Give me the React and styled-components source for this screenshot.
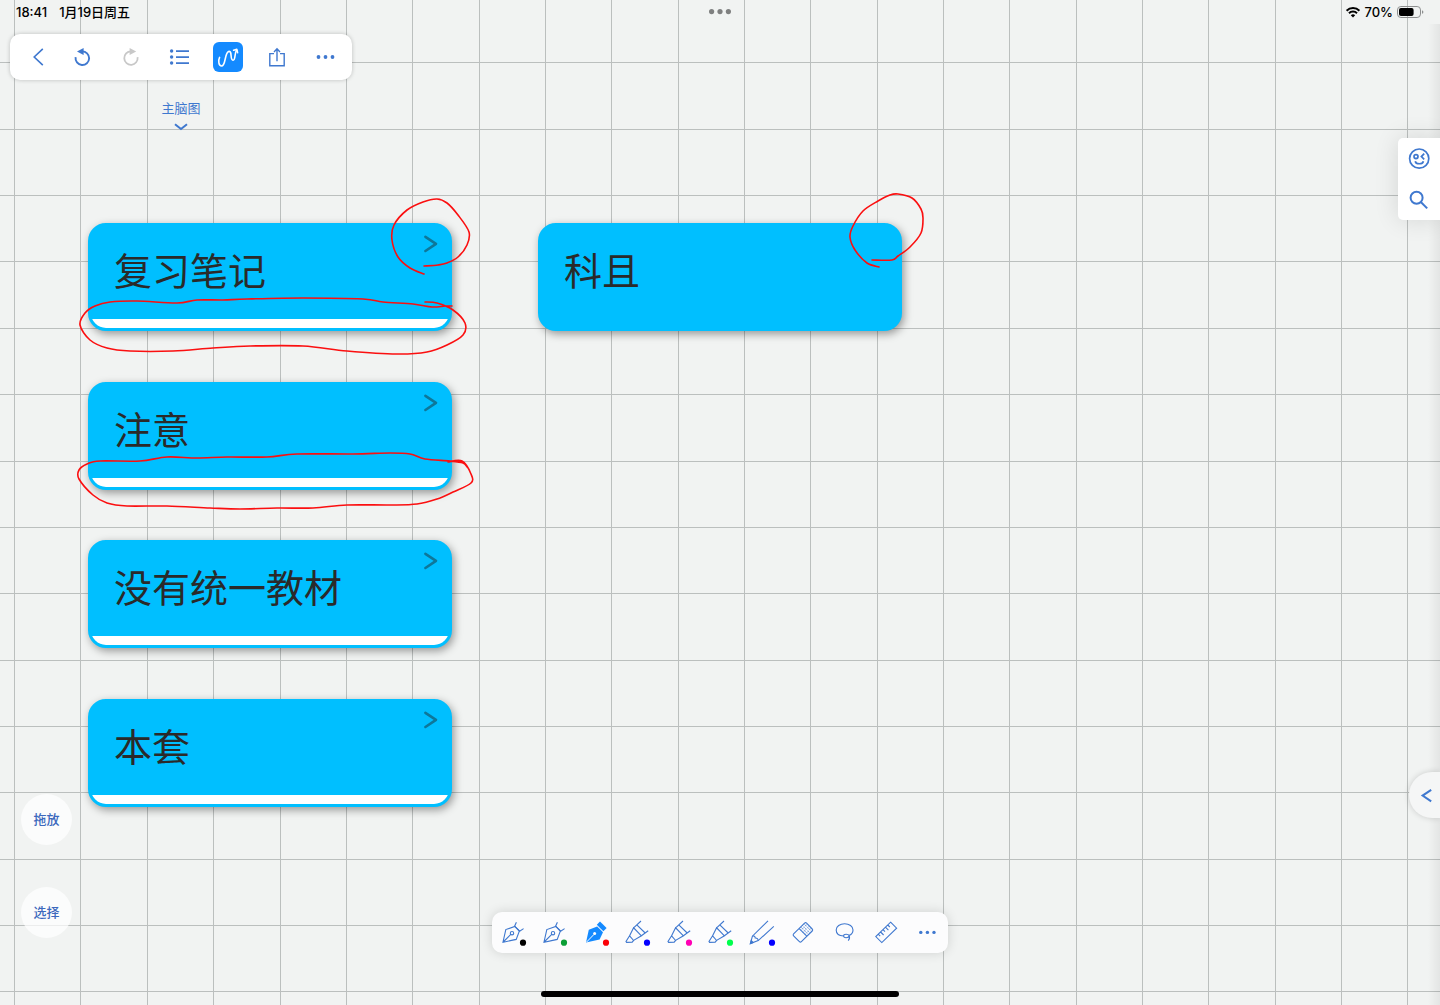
import React from 'react'
import styled, { createGlobalStyle } from 'styled-components'

const COLORS = {
  PAPER: '#f1f3f2',
  GRID: '#bbbfbe',
  BLUE: '#3f78cf',
  BLUE_DARK: '#3c69bd',
  ACTIVE: '#148aff',
  CARD: '#00bfff',
  INK: '#fb0f10',
  DISABLED: '#c8c8c8',
}

const GlobalStyle = createGlobalStyle`
  * {
    box-sizing: border-box;
  }
  body {
    margin: 0;
    font-family: Inter, 'Noto Sans CJK SC', sans-serif;
    background: ${COLORS.PAPER};
  }
  button {
    padding: 0;
    border: 0;
    background: none;
    font: inherit;
    color: inherit;
    cursor: pointer;
  }
  svg {
    display: block;
  }
`

const Screen = styled.div`
  position: relative;
  min-height: 100vh;
  display: grid;
  overflow: hidden;
`

// free canvas under the controls

const Canvas = styled.main`
  position: absolute;
  inset: 0;
`

const Layer = styled.svg`
  position: absolute;
  inset: 0;
  width: 100%;
  height: 100%;
  pointer-events: none;
`

const Card = styled.article`
  position: absolute;
  left: ${({ $x }) => $x}px;
  top: ${({ $y }) => $y}px;
  width: 364px;
  height: 108px;
  display: flex;
  flex-direction: column;
  justify-content: space-between;
  border: 3px solid ${COLORS.CARD};
  border-radius: 18px;
  background: ${COLORS.CARD};
  box-shadow: 2px 3px 9px rgba(0, 0, 0, 0.38);
  overflow: hidden;
`

const CardHead = styled.div`
  display: flex;
  justify-content: space-between;
  align-items: flex-start;
  padding: 8px 8px 0 23px;
`

const CardTitle = styled.h2`
  margin: 0;
  padding-top: 7px;
  font-family: 'Noto Sans CJK SC', sans-serif;
  font-size: 38px;
  font-weight: 400;
  line-height: 56px;
  color: #2a2a2a;
`

const CardStrip = styled.div`
  height: 9px;
  background: #fff;
`

// floating controls

const Chrome = styled.div`
  position: relative;
  display: grid;
  grid-template-rows: 24px 1fr 24px;
  pointer-events: none;

  button {
    pointer-events: auto;
  }
`

const StatusBar = styled.header`
  display: grid;
  grid-template-columns: 1fr auto 1fr;
  align-items: center;
  padding: 0 16px;
  font-size: 13px;
  font-weight: 500;
  line-height: 22px;
  color: #000;
`

const StatusGroup = styled.div`
  display: flex;
  align-items: center;
  justify-content: ${({ $end }) => ($end ? 'flex-end' : 'flex-start')};
  gap: ${({ $end }) => ($end ? 3 : 12)}px;
`

const Body = styled.div`
  display: grid;
  grid-template-columns: 1fr auto 1fr;
`

const LeftColumn = styled.div`
  display: flex;
  flex-direction: column;
  justify-content: space-between;
  align-items: flex-start;
  padding: 10px 0 43px 10px;
`

const TopTools = styled.div`
  display: flex;
  flex-direction: column;
  align-items: center;
  gap: 18px;
`

const Toolbar = styled.nav`
  height: 46px;
  display: flex;
  align-items: center;
  gap: 19px;
  padding: 0 11px 0 19px;
  border-radius: 10px;
  background: #fff;
  box-shadow: 0 0 4px rgba(0, 0, 0, 0.22);
`

const ToolButton = styled.button`
  width: ${({ $narrow }) => ($narrow ? 18 : 30)}px;
  height: 30px;
  border-radius: 6px;
  color: ${({ $active, disabled }) => (disabled ? COLORS.DISABLED : $active ? '#fff' : COLORS.BLUE)};
  background: ${({ $active }) => ($active ? COLORS.ACTIVE : 'none')};
`

const MapSwitch = styled.button`
  display: flex;
  flex-direction: column;
  align-items: center;
  gap: 5px;
  font-size: 13px;
  line-height: 20px;
  color: ${COLORS.BLUE};
`

const RoundButtons = styled.div`
  display: flex;
  flex-direction: column;
  gap: 42px;
  padding-left: 11px;
`

const RoundButton = styled.button`
  width: 51px;
  height: 51px;
  padding-bottom: 2px;
  border-radius: 50%;
  background: rgba(255, 255, 255, 0.72);
  font-size: 13px;
  font-weight: 500;
  color: ${COLORS.BLUE_DARK};
`

const PenBar = styled.nav`
  align-self: end;
  width: 456px;
  height: 41px;
  display: flex;
  margin-bottom: 28px;
  border-radius: 10px;
  background: #fcfcfd;
  box-shadow: 0 0 12px rgba(0, 0, 0, 0.14);
`

const PenButton = styled.button`
  flex: 1;
  height: 41px;
  color: ${COLORS.BLUE};
`

const RightColumn = styled.div`
  position: relative;
  display: flex;
  flex-direction: column;
  justify-content: space-between;
  align-items: flex-end;
  padding: 114px 0 163px;
`

const EdgeShade = styled.div`
  position: absolute;
  top: 0;
  right: 0;
  bottom: -24px;
  width: 12px;
  background: linear-gradient(to right, transparent, rgba(0, 0, 0, 0.06));
`

const SidePanel = styled.nav`
  position: relative;
  width: 42px;
  display: flex;
  flex-direction: column;
  border-radius: 5px 0 0 5px;
  background: #fff;
  box-shadow: 0 0 24px rgba(0, 0, 0, 0.12);
`

const SideButton = styled.button`
  height: 41px;
  color: ${COLORS.BLUE};
`

const EdgeTab = styled.button`
  position: relative;
  width: 31px;
  height: 46px;
  border-radius: 23px 0 0 23px;
  background: #f5f6f6;
  box-shadow: 0 0 6px rgba(0, 0, 0, 0.16);
  color: ${COLORS.BLUE};
`

const HomeRow = styled.footer`
  display: flex;
  justify-content: center;
  align-items: flex-end;
  padding-bottom: 8px;
`

const HomeBar = styled.div`
  width: 358px;
  height: 6px;
  border-radius: 3px;
  background: #000;
`

const Stroke = ({ w = 30, h = 30, size = 1.6, children }) => (
  <svg
    width={w}
    height={h}
    viewBox={`0 0 ${w} ${h}`}
    fill="none"
    stroke="currentColor"
    strokeWidth={size}
    aria-hidden="true"
  >
    {children}
  </svg>
)

const Dots = ({ xs, y, r }) => (
  <g fill="currentColor" stroke="none">
    {xs.map(x => (
      <circle key={x} cx={x} cy={y} r={r} />
    ))}
  </g>
)

const tools = [
  {
    name: '返回',
    narrow: true,
    icon: (
      <Stroke w={18}>
        <path d="M13.8 6.8 5.2 15l8.6 8.2" />
      </Stroke>
    ),
  },
  {
    name: '撤销',
    icon: (
      <Stroke size={1.9}>
        <path d="M9.6 15.2a6.8 6.8 0 1 0 6.4-5.8" />
        <path d="M11 9.6 17.6 6v7z" fill="currentColor" stroke="none" />
      </Stroke>
    ),
  },
  {
    name: '重做',
    disabled: true,
    icon: (
      <Stroke size={1.8}>
        <path d="M22.6 15.2a6.7 6.7 0 1 1-6.6-5.8" />
        <path d="M21.2 9.6 14.6 6v7z" fill="currentColor" stroke="none" />
      </Stroke>
    ),
  },
  {
    name: '目录',
    icon: (
      <Stroke size={1.7}>
        <path d="M12 9.2h13M12 15.2h13M12 21.2h13" />
        <Dots xs={[7.6]} y={9} r={1.7} />
        <Dots xs={[7.6]} y={15} r={1.7} />
        <Dots xs={[7.6]} y={21} r={1.7} />
      </Stroke>
    ),
  },
  {
    name: '手写',
    active: true,
    icon: (
      <Stroke size={1.6}>
        <g strokeLinecap="round" strokeLinejoin="round">
          <path d="M6.6 15.4C5 18.6 5.6 24 8.6 24c4.4 0 2.8-14 7.4-14.6 3.4-.4.8 8.6 4 8.8 2.800.2 1.200-6.600 3.600-10" />
          <path d="M20.6 8.2 23.8 7.4l.8 3.2" />
        </g>
      </Stroke>
    ),
  },
  {
    name: '分享',
    icon: (
      <Stroke size={1.4}>
        <path d="M12 11.6H7.8v12.2h14.4V11.6H18M15 19.2V7M12 10l3-3.2 3 3.2" />
      </Stroke>
    ),
  },
  {
    name: '更多',
    icon: (
      <Stroke>
        <Dots xs={[7.5, 14.5, 21.5]} y={15} r={1.9} />
      </Stroke>
    ),
  },
]

const nib = (
  <>
    <path d="M11 30.2 13.8 17.6l9-3.2 4.6 4.6-3.2 8.4zM11.2 30l7.8-7.8" />
    <path d="M24.4 10.2 22.6 14.2l5 5 4-2.6" />
    <circle cx="20" cy="21.2" r="1.7" />
  </>
)

const solidNib = (
  <g fill={COLORS.ACTIVE} stroke="none">
    <path d="M11 30.6 13.8 17.8l8.4-3.4 5.8 5.8-3.4 7.4z" />
    <path d="M21.8 12.8 25 9.6l6.6 6.4-3.2 3.2z" />
    <path d="M11.6 30 18.8 22.6" stroke="#fff" strokeWidth="1" />
    <circle cx="19.6" cy="21.6" r="1.5" fill="#fff" />
  </g>
)

const highlighter = (
  <>
    <path d="M13.6 23.8 10 29.4l.6 1 5.6-.2 1.4-1.8z" />
    <path d="M13.6 23.8 17.6 15.8l7.8 8-7.8 4.6M17.6 15.8 25 9M25.4 23.8 32.2 18.8M20.8 12.8l8.4 8.2" />
  </>
)

const pens = [
  { name: '钢笔 黑色', dot: '#000', drawing: nib },
  { name: '钢笔 绿色', dot: '#0c9f36', drawing: nib },
  { name: '钢笔 红色', dot: '#fb0007', drawing: solidNib },
  { name: '荧光笔 蓝色', dot: '#0400ff', drawing: highlighter },
  { name: '荧光笔 粉色', dot: '#ff00b4', drawing: highlighter },
  { name: '荧光笔 绿色', dot: '#00ff4c', drawing: highlighter },
  {
    name: '铅笔 蓝色',
    dot: '#0400ff',
    drawing: (
      <>
        <path d="M27 8.8 11.4 24.2 9.4 31.6 17.2 28.6 32.8 14.4" />
        <path d="M11.4 24.2c1.8-.6 2.8.2 2.8 1.8 1.8-.2 3 .8 3 2.6" />
        <path d="M9.4 31.6l.8-3 2 2z" fill="currentColor" />
      </>
    ),
  },
  {
    name: '橡皮',
    drawing: (
      <>
        <path d="M22.6 11.2q1-1 2 0l5.6 5.8q1 1 0 2L19.4 29.6q-1 1-2 0L11.6 23.8q-1-1 0-2zM17.2 16.6l7.6 7.6" />
        <path
          d="M18.8 15l7.4 7.4M20.4 13.4l7.4 7.4M22 11.8l7.4 7.4M19 18.4l6-6.2M21 20.4l6-6.2M23 22.4l6-6.2"
          strokeWidth="0.8"
          strokeDasharray="1 1"
        />
      </>
    ),
  },
  {
    name: '套索',
    drawing: (
      <>
        <path d="M19.6 24C15 23.8 12.2 21.4 12.2 18c0-3.6 3.8-6.2 8.4-6.2s8.4 2.6 8.4 6.2c0 2.4-1.4 4.4-3.8 5.4" />
        <path d="M25.2 23.8c-.8-2-5.6-2-5.6.2 0 2.4 4.8 2.2 5.6-.2.6 1.6.4 3.4-1 4.8" />
      </>
    ),
  },
  {
    name: '直尺',
    drawing: (
      <path d="M25.6 10.2 31.6 16.2 16.8 30.6 10.8 24.6zM13.2 22.2l2 2M15.6 20l3 3M18 17.6l2 2M20.4 15.2l3 3M22.8 13l2 2" />
    ),
  },
  { name: '更多画笔', drawing: <Dots xs={[13.8, 20.4, 27]} y={20.4} r={1.7} /> },
]

const cards = [
  { title: '复习笔记', x: 88, y: 223, nested: true },
  { title: '注意', x: 88, y: 382, nested: true },
  { title: '没有统一教材', x: 88, y: 540, nested: true },
  { title: '本套', x: 88, y: 699, nested: true },
  { title: '科且', x: 538, y: 223 },
]

const strokes = [
  [
    [424, 274], [410, 268], [398, 257], [392, 240], [394, 225], [407, 210], [423, 202], [437, 199],
    [447, 203], [458, 215], [469, 232], [467, 245], [458, 257], [447, 263], [438, 265], [424, 266],
  ],
  [
    [425, 302], [437, 303], [453, 310], [465, 323], [463, 335], [447, 345], [427, 352], [397, 354],
    [347, 351], [303, 346], [250, 346], [213, 348], [173, 351], [130, 351], [107, 348], [90, 340],
    [80, 325], [85, 313], [95, 306], [110, 302], [137, 301], [177, 303], [197, 300], [223, 300],
    [247, 299], [303, 298], [363, 299], [383, 302], [413, 304], [432, 307], [445, 306], [452, 306],
  ],
  [
    [448, 462], [462, 461], [471, 474], [471, 483], [453, 492], [437, 499], [417, 504], [390, 505],
    [347, 505], [313, 508], [277, 508], [240, 509], [210, 508], [167, 506], [127, 506], [107, 503],
    [93, 495], [79, 479], [79, 470], [87, 464], [100, 461], [140, 461], [167, 457], [197, 458],
    [227, 457], [267, 457], [297, 454], [353, 454], [390, 453], [410, 454], [425, 459], [450, 461],
    [463, 463], [467, 467],
  ],
  [
    [879, 267], [867, 263], [855, 250], [850, 237], [853, 226], [863, 211], [878, 201], [890, 195],
    [898, 194], [912, 198], [921, 209], [923, 218], [921, 233], [910, 247], [898, 256], [892, 260],
    [872, 260],
  ],
]

// smooth curve that passes through every point
const toPath = points =>
  points.reduce((d, [x, y], i) => {
    if (i === 0) return `M${x} ${y}`
    const [px, py] = points[i - 1]
    const [ax, ay] = points[i - 2] || points[0]
    const [bx, by] = points[i + 1] || points[i]
    return `${d}C${px + (x - ax) / 6} ${py + (y - ay) / 6} ${x - (bx - px) / 6} ${y - (by - py) / 6} ${x} ${y}`
  }, '')

const GRID_STEP = 66.35
const gridLines = Array.from({ length: 60 }, (_, i) => i * GRID_STEP)

const App = () => (
  <>
    <GlobalStyle />
    <Screen>
      <Canvas>
        <Layer stroke={COLORS.GRID} shapeRendering="crispEdges" aria-hidden="true">
          {gridLines.map(at => (
            <g key={at}>
              <line x1={14.6 + at} x2={14.6 + at} y1="0" y2="100%" />
              <line x1="0" x2="100%" y1={62.9 + at} y2={62.9 + at} />
            </g>
          ))}
        </Layer>
        {cards.map(card => (
          <Card key={card.title} $x={card.x} $y={card.y}>
            <CardHead>
              <CardTitle>{card.title}</CardTitle>
              {card.nested && (
                <button type="button" aria-label={`展开 ${card.title}`}>
                  <svg width="20" height="20" viewBox="0 0 20 20" fill="none" aria-hidden="true">
                    <path
                      d="M4.4 2.8 15 9.8 4.4 17"
                      stroke="#0e7799"
                      strokeWidth="2.6"
                      strokeLinecap="round"
                      strokeLinejoin="round"
                    />
                  </svg>
                </button>
              )}
            </CardHead>
            {card.nested && <CardStrip />}
          </Card>
        ))}
        <Layer fill="none" stroke={COLORS.INK} strokeWidth="1.6" strokeLinecap="round" aria-hidden="true">
          {strokes.map(points => (
            <path key={points[0].join()} d={toPath(points)} />
          ))}
        </Layer>
      </Canvas>

      <Chrome>
        <StatusBar>
          <StatusGroup>
            <span>18:41</span>
            <span>1月19日周五</span>
          </StatusGroup>
          <svg width="24" height="8" viewBox="0 0 24 8" fill="#7f8080" aria-hidden="true">
            <circle cx="3.6" cy="3.6" r="2.6" />
            <circle cx="12" cy="3.6" r="2.6" />
            <circle cx="20.4" cy="3.6" r="2.6" />
          </svg>
          <StatusGroup $end>
            <svg width="16" height="12" viewBox="0 0 16 12" fill="none" stroke="#000" aria-hidden="true">
              <path d="M1.6 4.7a9 9 0 0 1 12.8 0M4 7.2a5.6 5.6 0 0 1 8 0" strokeWidth="2" />
              <path d="M8 11.4 5.8 9.2a3.2 3.2 0 0 1 4.4 0z" fill="#000" stroke="none" />
            </svg>
            <span>70%</span>
            <svg width="28" height="12" viewBox="0 0 28 12" aria-hidden="true">
              <rect x="1.5" y="0.5" width="23" height="11" rx="3.4" fill="none" stroke="#8d8f8f" />
              <rect x="3" y="2" width="14.6" height="8" rx="2" />
              <path d="M26 4.2q1.4.4 1.4 1.8T26 7.8z" fill="#8d8f8f" />
            </svg>
          </StatusGroup>
        </StatusBar>

        <Body>
          <LeftColumn>
            <TopTools>
              <Toolbar>
                {tools.map(tool => (
                  <ToolButton
                    key={tool.name}
                    type="button"
                    aria-label={tool.name}
                    disabled={tool.disabled}
                    $active={tool.active}
                    $narrow={tool.narrow}
                  >
                    {tool.icon}
                  </ToolButton>
                ))}
              </Toolbar>
              <MapSwitch type="button">
                主脑图
                <Stroke w={14} h={8} size={2}>
                  <path d="M1 1.2 7 6l6-4.8" />
                </Stroke>
              </MapSwitch>
            </TopTools>
            <RoundButtons>
              <RoundButton type="button">拖放</RoundButton>
              <RoundButton type="button">选择</RoundButton>
            </RoundButtons>
          </LeftColumn>

          <PenBar>
            {pens.map(pen => (
              <PenButton key={pen.name} type="button" aria-label={pen.name}>
                <Stroke w={41} h={41} size={1.1}>
                  {pen.drawing}
                  {pen.dot && <circle cx="31" cy="30.7" r="3.1" fill={pen.dot} stroke="none" />}
                </Stroke>
              </PenButton>
            ))}
          </PenBar>

          <RightColumn>
            <EdgeShade />
            <SidePanel>
              <SideButton type="button" aria-label="贴纸">
                <Stroke w={42} h={41} size={1.7}>
                  <circle cx="21.2" cy="20.6" r="9.6" />
                  <circle cx="18" cy="18.6" r="2" />
                  <path d="M26.2 15.6 23.4 18.6l2.8 2.8M17.2 23.2c.8 3.4 7.4 3.4 8.2 0" />
                </Stroke>
              </SideButton>
              <SideButton type="button" aria-label="搜索">
                <Stroke w={42} h={41} size={2}>
                  <circle cx="18.6" cy="18.8" r="6" />
                  <path d="M22.8 23 29.2 29.4" />
                </Stroke>
              </SideButton>
            </SidePanel>
            <EdgeTab type="button" aria-label="展开侧栏">
              <Stroke w={31} h={46} size={2}>
                <path d="M22.2 17.8 13.6 23.6l8.6 5.8" />
              </Stroke>
            </EdgeTab>
          </RightColumn>
        </Body>

        <HomeRow>
          <HomeBar />
        </HomeRow>
      </Chrome>
    </Screen>
  </>
)

export default App
